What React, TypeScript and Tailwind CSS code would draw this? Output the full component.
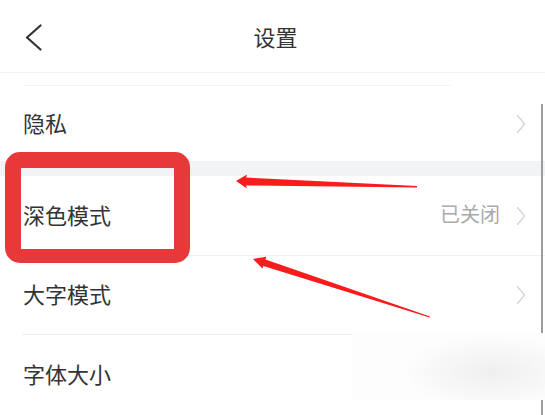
import type { FunctionComponent } from "react";

const Chevron: FunctionComponent = () => (
  <svg width="10" height="20" viewBox="0 0 10 20" fill="none">
    <path d="M1.5 1.5 L8.5 10 L1.5 18.5" stroke="#d6d6d6" strokeWidth="1.4" strokeLinecap="round" strokeLinejoin="round" />
  </svg>
);

const Row: FunctionComponent<{ label: string; value?: string; arrow?: boolean; h: string }> = ({ label, value, arrow = true, h }) => (
  <div className={`flex items-center justify-between pl-[23px] pr-[19px] ${h}`}>
    <span className="text-[22px] text-[#333333] leading-none pb-[4px]">{label}</span>
    <div className="flex items-center gap-[16px]">
      {value && <span className="text-[20px] text-[#aaaaaa] leading-none pb-[3px]">{value}</span>}
      {arrow && <Chevron />}
    </div>
  </div>
);

export default function App() {
  return (
    <div className="relative w-[545px] h-[415px] overflow-hidden bg-white font-['Noto_Sans_CJK_SC','Noto_Sans',sans-serif]">
      {/* header */}
      <div className="h-[73px] grid grid-cols-[1fr_auto_1fr] items-center pt-[3px] border-b border-[#f2f2f2]">
        <div className="pl-[25px]">
          <svg width="18" height="28" viewBox="0 0 18 28" fill="none">
            <path d="M15.5 1.5 L2 13.5 L15.5 25.5" stroke="#333333" strokeWidth="2.2" strokeLinecap="round" strokeLinejoin="round" />
          </svg>
        </div>
        <span className="ml-[6px] text-[22px] text-[#333333] leading-none pb-[3px]">设置</span>
        <div />
      </div>

      <div className="h-[13px] ml-[25px] mr-[95px] border-b border-[#f3f3f3]" />

      <Row label="隐私" h="h-[75px]" />
      <div className="h-[15px] bg-[#f2f3f5]" />
      <Row label="深色模式" value="已关闭" h="h-[79px]" />
      <div className="h-px ml-[25px] bg-[#f0f0f0]" />
      <Row label="大字模式" h="h-[78px]" />
      <div className="h-px ml-[22px] bg-[#f0f0f0]" />
      <Row label="字体大小" arrow={false} h="h-[80px]" />

      {/* blurred patch */}
      <div className="absolute left-[353px] top-[333px] w-[192px] h-[67px] bg-[radial-gradient(ellipse_60%_70%_at_72%_58%,#efefef_0%,#f7f7f7_45%,#fdfdfd_80%)]" />

      {/* window edge */}
      <div className="absolute right-[2px] top-[104px] w-[2px] h-[229px] bg-[#9c9c9c]" />
      <div className="absolute right-[2px] top-[400px] w-[2px] h-[15px] bg-[#9c9c9c]" />

      {/* red highlight box */}
      <div className="absolute left-[5px] top-[152px] w-[185px] h-[111px] rounded-[15px] border-[16px] border-b-[14px] border-[#e7393a]" />

      {/* arrows */}
      <svg className="absolute inset-0" width="545" height="415" viewBox="0 0 545 415">
        <polygon points="236,181 247,174.5 246,177.5 417,186 417,187.5 246,185.5 247,188.5" fill="#fa1c1c" />
        <polygon points="253,259 266.3,256.8 265.5,259.4 430,316.5 429.7,317.6 263.3,266 262.5,268.6" fill="#fa1c1c" />
      </svg>
    </div>
  );
}
